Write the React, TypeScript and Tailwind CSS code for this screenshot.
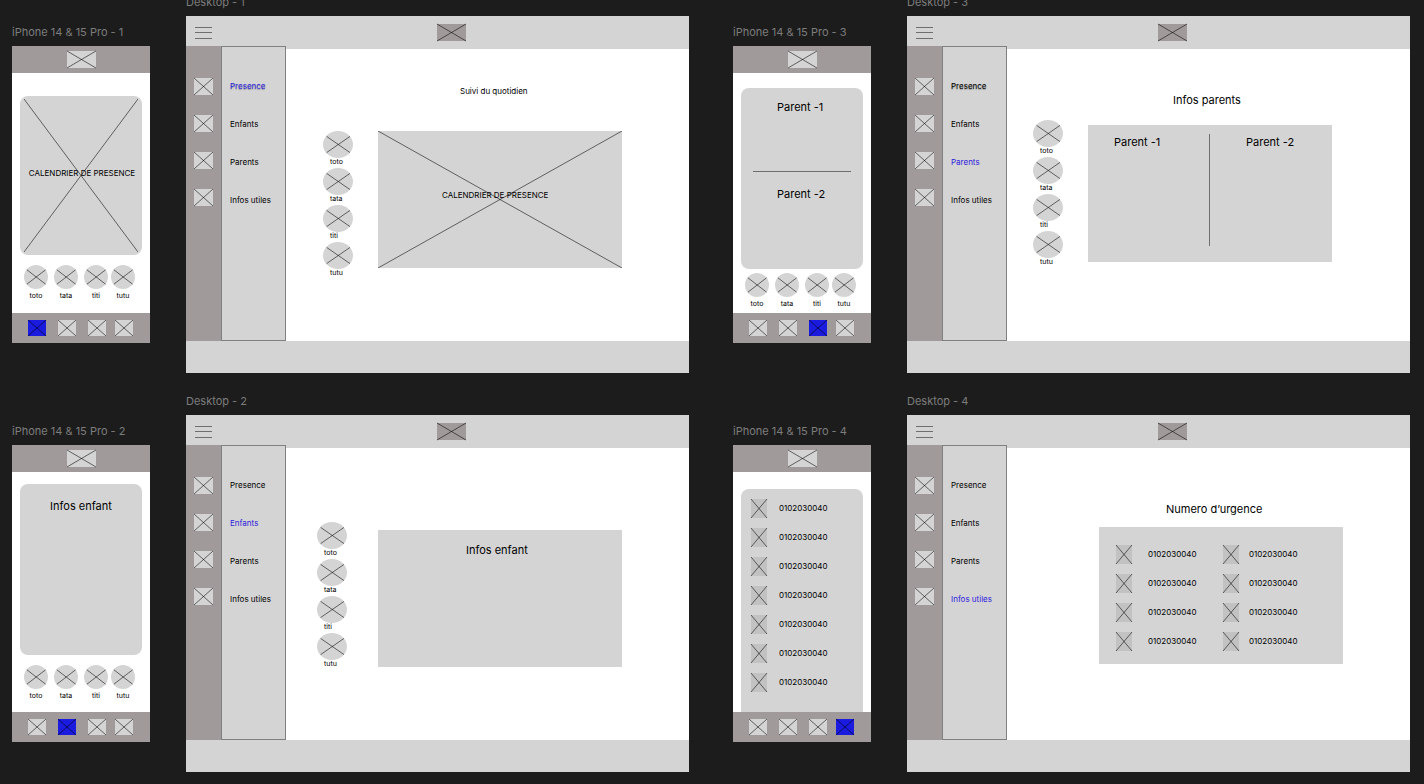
import type { ReactNode } from "react";

type Tone = "light" | "dark" | "soft" | "active";

const tones: Record<Tone, string> = {
  light: "#d4d4d4",
  dark: "#a09b9a",
  soft: "#c2c2c2",
  active: "#1b1be0",
};

function Crossed({ className, tone = "light" }: { className: string; tone?: Tone }) {
  return (
    <svg className={`block shrink-0 overflow-visible ${className}`} aria-hidden="true">
      <rect width="100%" height="100%" fill={tones[tone]} />
      <g stroke="#000" strokeWidth="0.7" strokeOpacity="0.8">
        <line x1="0" y1="0" x2="100%" y2="100%" />
        <line x1="0" y1="100%" x2="100%" y2="0" />
      </g>
    </svg>
  );
}

function Avatar({ className }: { className: string }) {
  return (
    <svg className={`block shrink-0 ${className}`} aria-hidden="true">
      <ellipse cx="50%" cy="50%" rx="50%" ry="50%" fill="#d4d4d4" />
      <g stroke="#000" strokeWidth="0.7" strokeOpacity="0.8">
        <line x1="12%" y1="20%" x2="90%" y2="80%" />
        <line x1="12%" y1="80%" x2="90%" y2="20%" />
      </g>
    </svg>
  );
}

function Diagonals({ className }: { className: string }) {
  return (
    <svg className={`absolute ${className}`} aria-hidden="true">
      <g stroke="#000" strokeWidth="0.7" strokeOpacity="0.8">
        <line x1="0" y1="0" x2="100%" y2="100%" />
        <line x1="0" y1="100%" x2="100%" y2="0" />
      </g>
    </svg>
  );
}

const children = ["toto", "tata", "titi", "tutu"];
const menu = ["Presence", "Enfants", "Parents", "Infos utiles"];
const phoneNumber = "0102030040";

function BoardLabel({ children }: { children: ReactNode }) {
  return (
    <h2 className="mb-1.5 text-[11px] leading-4 whitespace-nowrap text-[#7d7d7d]">{children}</h2>
  );
}

function Phone({ id, body }: { id: number; body: ReactNode }) {
  return (
    <section className="w-[138px] shrink-0 pt-[30px]">
      <BoardLabel>iPhone 14 &amp; 15 Pro - {id}</BoardLabel>
      <div className="flex h-[297px] flex-col bg-white">
        <header className="flex h-[27px] items-center justify-center bg-[#a09b9a]">
          <Crossed className="h-[17px] w-[29px]" />
        </header>
        <div className="flex flex-1 flex-col px-2">{body}</div>
        <nav className="grid h-[30px] grid-cols-[30px_30px_27px_19px] items-center bg-[#a09b9a] pl-4">
          {menu.map((name, i) => (
            <a key={name} href="#" aria-label={name}>
              <Crossed className="h-4 w-[18px]" tone={i === id - 1 ? "active" : "light"} />
            </a>
          ))}
        </nav>
      </div>
    </section>
  );
}

function PhoneChildren() {
  return (
    <ul className="grid grid-cols-[30px_30px_27px_24px] pl-1 text-[7px] leading-[14px]">
      {children.map((name) => (
        <li key={name}>
          <a href="#" className="flex w-6 flex-col items-center">
            <Avatar className="size-6" />
            {name}
          </a>
        </li>
      ))}
    </ul>
  );
}

function DesktopChildren() {
  return (
    <ul className="flex w-[30px] shrink-0 flex-col gap-0.5 text-[7px] leading-2">
      {children.map((name) => (
        <li key={name}>
          <a href="#" className="block">
            <Avatar className="h-[27px] w-[30px]" />
            <span className="block pl-[7px]">{name}</span>
          </a>
        </li>
      ))}
    </ul>
  );
}

function Desktop({ id, shadow, body }: { id: number; shadow?: boolean; body: ReactNode }) {
  return (
    <section className="min-w-0 flex-1">
      <BoardLabel>Desktop - {id}</BoardLabel>
      <div className="flex h-[357px] flex-col bg-white">
        <header className="flex h-[33px] items-center gap-[225px] bg-[#d4d4d4] pl-[9px]">
          <button type="button" aria-label="Menu">
            <svg className="block h-[13px] w-[17px]" stroke="#6e6e6e" strokeWidth="1">
              <path d="M0 1.5h17M0 6.5h17M0 12.5h17" />
            </svg>
          </button>
          <Crossed className="h-[17px] w-[29px]" tone="dark" />
        </header>
        <div className="flex flex-1">
          <aside className="relative -mt-[3px] flex">
            <div className="flex w-[35px] flex-col items-center gap-5 bg-[#a09b9a] pt-8">
              {menu.map((name) => (
                <Crossed key={name} className="h-[17px] w-[19px]" />
              ))}
            </div>
            <nav className="flex w-[65px] flex-col gap-6 border border-[#808080] bg-[#d4d4d4] pt-8 pl-2 text-[8px] leading-[14px] whitespace-nowrap">
              {menu.map((name, i) => (
                <a
                  key={name}
                  href="#"
                  className={`${i === id - 1 ? "text-[#2b20dc]" : "text-black"} ${
                    shadow && i === 0 ? "[text-shadow:0_1px_1px_rgba(0,0,0,0.3)]" : ""
                  }`}
                >
                  {name}
                </a>
              ))}
            </nav>
          </aside>
          <main className="min-w-0 flex-1">{body}</main>
        </div>
        <footer className="h-8 bg-[#d4d4d4]" />
      </div>
    </section>
  );
}

function IconColumn({ count }: { count: number }) {
  return (
    <div className="flex flex-col gap-2.5">
      {Array.from({ length: count }, (_, i) => (
        <Crossed key={i} className="h-[19px] w-4" tone="soft" />
      ))}
    </div>
  );
}

function NumberColumn({ count }: { count: number }) {
  return (
    <ul className="flex flex-col gap-2.5 text-[8px] leading-[19px]">
      {Array.from({ length: count }, (_, i) => (
        <li key={i}>{phoneNumber}</li>
      ))}
    </ul>
  );
}

export default function App() {
  return (
    <div className="min-h-screen overflow-hidden bg-[#1c1c1c] font-['Inter',sans-serif] text-black">
      <div className="-mt-1.5 grid grid-cols-2 gap-x-11 gap-y-5 pr-3.5 pb-3 pl-3">
        <div className="flex gap-9">
          <Phone
            id={1}
            body={
              <>
                <div className="relative mt-[23px] mb-2.5 flex h-[159px] items-center justify-center rounded-lg bg-[#d4d4d4] pb-1.5 pl-0.5">
                  <Diagonals className="inset-x-1 inset-y-[3px] h-[153px] w-[114px]" />
                  <p className="relative text-[8px] leading-3 whitespace-nowrap">CALENDRIER DE PRESENCE</p>
                </div>
                <PhoneChildren />
              </>
            }
          />
          <Desktop
            id={1}
            shadow
            body={
              <>
                <h3 className="pt-[34px] pl-[174px] text-[8px] leading-4">Suivi du quotidien</h3>
                <div className="mt-8 flex gap-[25px] pl-[37px]">
                  <DesktopChildren />
                  <div className="relative h-[137px] w-[244px] bg-[#d4d4d4] pt-[58px] pl-16">
                    <Diagonals className="inset-0 size-full" />
                    <p className="relative text-[8px] leading-3 whitespace-nowrap">CALENDRIER DE PRESENCE</p>
                  </div>
                </div>
              </>
            }
          />
        </div>

        <div className="flex gap-9">
          <Phone
            id={3}
            body={
              <>
                <div className="mt-[15px] mb-1 h-[181px] rounded-lg bg-[#d4d4d4] px-3 pt-[11px] text-[11px] leading-4">
                  <p className="pl-6">Parent -1</p>
                  <hr className="mt-14 mb-3.5 border-[#6e6e6e]" />
                  <p className="pl-6">Parent -2</p>
                </div>
                <PhoneChildren />
              </>
            }
          />
          <Desktop
            id={3}
            shadow
            body={
              <>
                <h3 className="pt-[43px] pl-[166px] text-[11px] leading-4">Infos parents</h3>
                <div className="mt-3 flex gap-[25px] pl-[26px]">
                  <DesktopChildren />
                  <div className="mt-[5px] grid h-[137px] w-[244px] grid-cols-2 bg-[#d4d4d4] pt-[9px] pb-4 text-[11px] leading-4">
                    <p className="border-r border-[#6e6e6e] pl-[26px]">Parent -1</p>
                    <p className="pl-9">Parent -2</p>
                  </div>
                </div>
              </>
            }
          />
        </div>

        <div className="flex gap-9">
          <Phone
            id={2}
            body={
              <>
                <div className="mt-3 mb-2.5 h-[171px] rounded-lg bg-[#d4d4d4] pt-3.5 text-center text-[11px] leading-4">
                  Infos enfant
                </div>
                <PhoneChildren />
              </>
            }
          />
          <Desktop
            id={2}
            body={
              <div className="flex gap-[31px] pt-[74px] pl-[31px]">
                <DesktopChildren />
                <div className="mt-2 h-[137px] w-[244px] bg-[#d4d4d4] pt-3 pl-[88px] text-[11px] leading-4">
                  Infos enfant
                </div>
              </div>
            }
          />
        </div>

        <div className="flex gap-9">
          <Phone
            id={4}
            body={
              <div className="mt-[17px] flex flex-1 gap-3 rounded-t-lg bg-[#d4d4d4] pt-2.5 pl-2.5">
                <IconColumn count={7} />
                <NumberColumn count={7} />
              </div>
            }
          />
          <Desktop
            id={4}
            body={
              <>
                <h3 className="pt-[53px] pl-[159px] text-[11px] leading-4">Numero d’urgence</h3>
                <div className="mt-2.5 ml-[92px] flex h-[137px] w-[244px] bg-[#d4d4d4] pt-[18px] pl-[17px]">
                  <div className="flex w-[107px] gap-4">
                    <IconColumn count={4} />
                    <NumberColumn count={4} />
                  </div>
                  <div className="flex gap-2.5">
                    <IconColumn count={4} />
                    <NumberColumn count={4} />
                  </div>
                </div>
              </>
            }
          />
        </div>
      </div>
    </div>
  );
}
